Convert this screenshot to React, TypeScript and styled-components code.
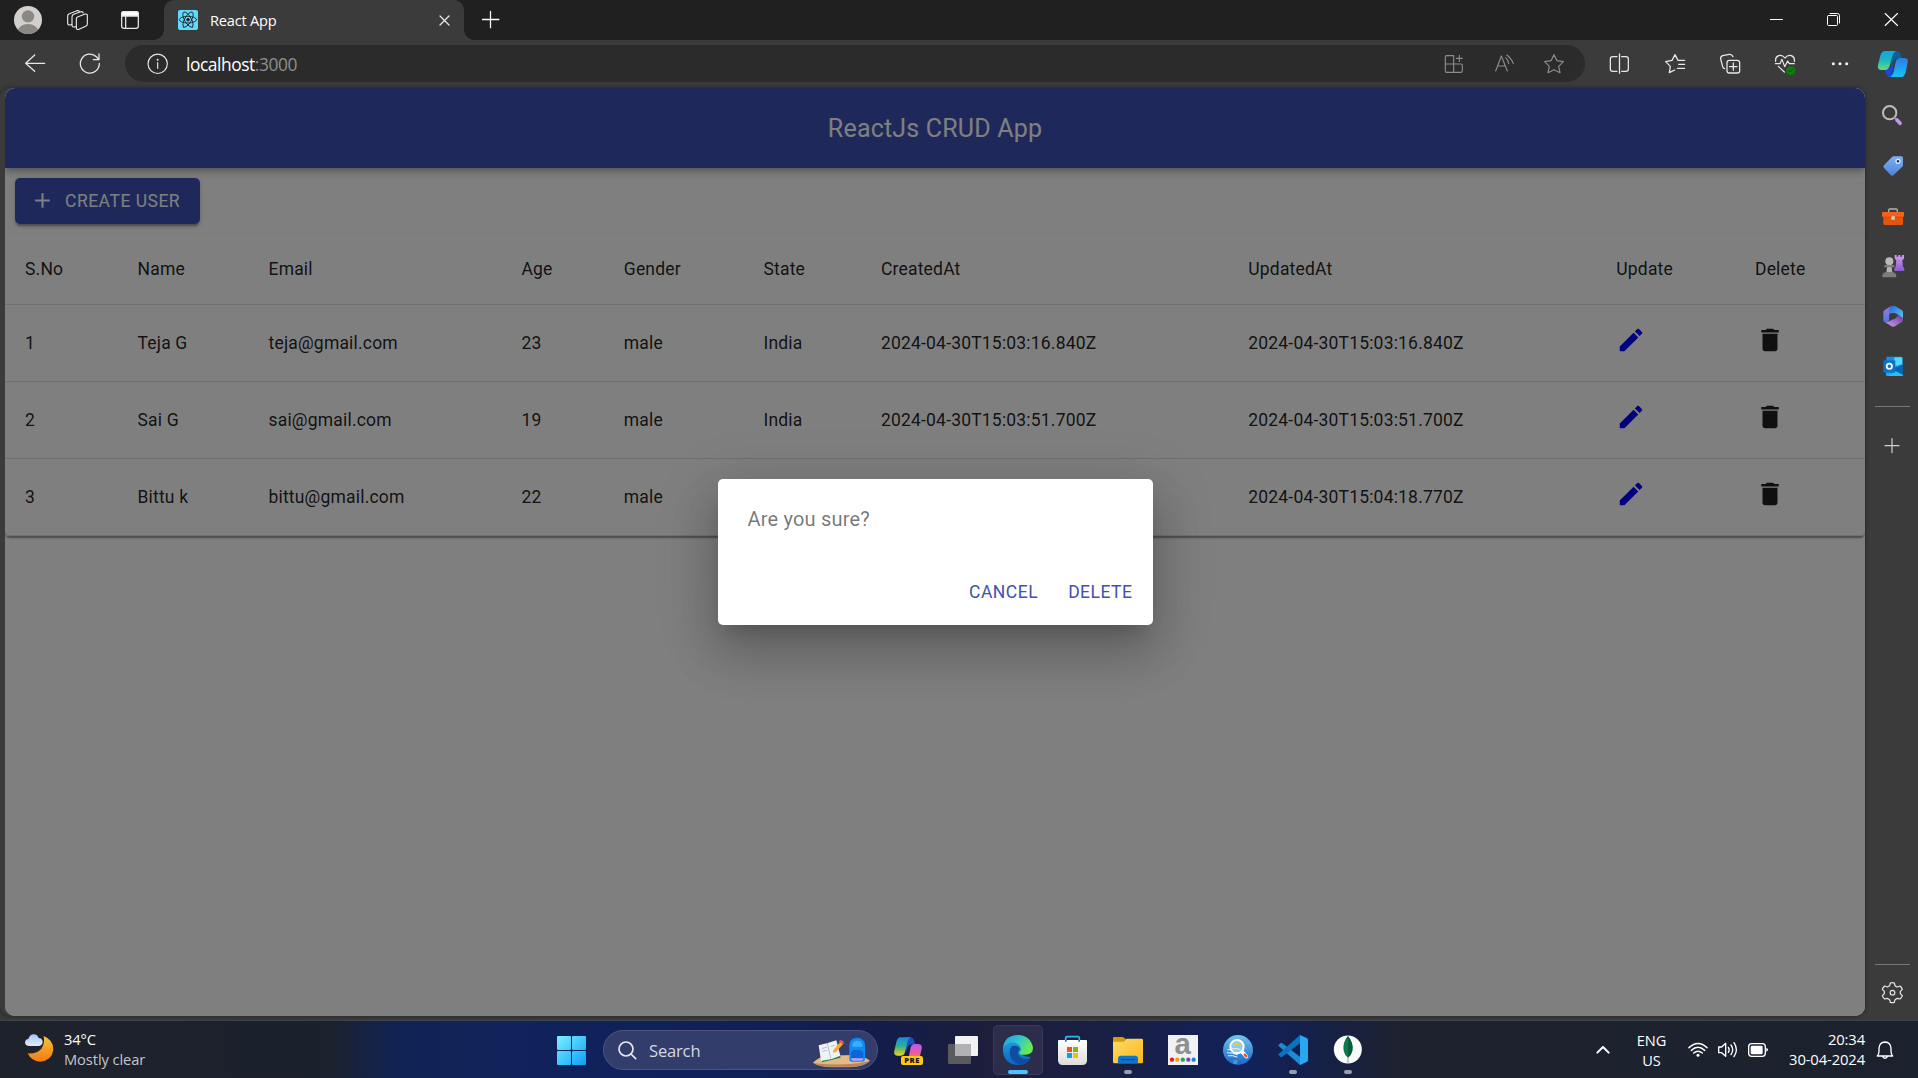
import React from "react";
import styled, { createGlobalStyle } from "styled-components";

const Global = createGlobalStyle`
  * { box-sizing: border-box; }
  html, body { margin: 0; padding: 0; background: #3b3b3b; overflow: hidden; }
`;

const ui = `"Open Sans", "Noto Sans", sans-serif`;

/* ---------- shared ---------- */

const Art = styled.svg`
  display: block;
  flex: none;
  overflow: visible;
`;

/* Every glyph is drawn on a grid of three units per pixel. */
type GlyphProps = {
  box: [number, number, number, number];
  color?: string;
  weight?: number;
  children: React.ReactNode;
};
const Glyph = ({ box, color = "#e8e8e8", weight = 3.8, children }: GlyphProps) => (
  <Art
    width={box[2] / 3}
    height={box[3] / 3}
    viewBox={box.join(" ")}
    fill="none"
    stroke={color}
    strokeWidth={weight}
    strokeLinecap="round"
    strokeLinejoin="round"
    aria-hidden
  >
    {children}
  </Art>
);

const Spacer = styled.div`
  flex: 1;
`;

/* ---------- browser chrome ---------- */

const Screen = styled.div`
  width: 1918px;
  height: 1078px;
  display: flex;
  flex-direction: column;
  background: #3b3b3b;
  font-family: ${ui};
`;

const TitleBar = styled.header`
  height: 40px;
  flex: none;
  display: flex;
  background: #202020;
`;

const Tab = styled.div`
  position: relative;
  width: 300px;
  height: 40px;
  margin-left: 4px;
  display: flex;
  align-items: center;
  background: #3b3b3b;
  border-radius: 10px 10px 0 0;
  &::before,
  &::after {
    content: "";
    position: absolute;
    bottom: 0;
    width: 10px;
    height: 10px;
  }
  &::before {
    left: -10px;
    background: radial-gradient(circle at 0 0, #202020 9.5px, #3b3b3b 10px);
  }
  &::after {
    right: -10px;
    background: radial-gradient(circle at 100% 0, #202020 9.5px, #3b3b3b 10px);
  }
`;

const TabTitle = styled.span`
  flex: 1;
  font-size: 14.6px;
  letter-spacing: -0.2px;
  line-height: 20px;
  color: #fff;
`;

const Toolbar = styled.div`
  height: 48px;
  flex: none;
  display: flex;
  padding-left: 8px;
  background: #3b3b3b;
`;

const Omnibox = styled.div`
  width: 1460px;
  height: 37px;
  margin: 5px 7px 0;
  padding-right: 6px;
  display: flex;
  align-items: center;
  background: #2b2b2b;
  border-radius: 19px;
`;

const Address = styled.div`
  margin-left: -1px;
  font-size: 17.4px;
  letter-spacing: -0.45px;
  line-height: 24px;
  color: #fff;
`;

const Port = styled.span`
  color: #8f8f8f;
`;

const Main = styled.div`
  height: 932px;
  flex: none;
  display: flex;
`;

const Sidebar = styled.aside`
  width: 53px;
  height: 932px;
  padding: 2px 0 3px;
  display: flex;
  flex-direction: column;
`;

const Divider = styled.div<{ $top?: number; $bottom: number }>`
  width: 35px;
  height: 1px;
  flex: none;
  margin: ${(p) => p.$top ?? 0}px 0 ${(p) => p.$bottom}px 10px;
  background: #777;
`;

/* ---------- web page ---------- */

const Viewport = styled.main`
  position: relative;
  width: 1860px;
  height: 927.5px;
  margin-left: 5px;
  overflow: hidden;
  background: #fff;
  border-radius: 10px;
  font-family: Roboto, sans-serif;
`;

const Frame = styled.div`
  border-radius: 10px;
  height: 927.5px;
  box-shadow: 0 0 4px rgba(0, 0, 0, 0.45);
`;

const AppBar = styled.div`
  position: relative;
  height: 80px;
  padding-top: 1px;
  display: flex;
  align-items: center;
  justify-content: center;
  background: #3f51b5;
  color: #fff;
  font-size: 25px;
  font-weight: 400;
  letter-spacing: 0.0075em;
  line-height: 41px;
  box-shadow: 0 2.5px 5px -1.25px rgba(0, 0, 0, 0.2), 0 5px 6.25px 0 rgba(0, 0, 0, 0.14),
    0 1.25px 12.5px 0 rgba(0, 0, 0, 0.12);
`;

const CreateButton = styled.button`
  height: 45.6px;
  margin: 10px;
  padding: 0 20px 0 15px;
  display: flex;
  align-items: center;
  gap: 10px;
  border: 0;
  border-radius: 5px;
  background: #3f51b5;
  color: #fff;
  font: 400 17.5px/30px Roboto, sans-serif;
  letter-spacing: 0.02857em;
  text-transform: uppercase;
  box-shadow: 0 3.75px 1.25px -2.5px rgba(0, 0, 0, 0.2), 0 2.5px 2.5px 0 rgba(0, 0, 0, 0.14),
    0 1.25px 6.25px 0 rgba(0, 0, 0, 0.12);
`;

const Paper = styled.section`
  border-radius: 5px;
  background: #fff;
  box-shadow: 0 2.5px 1.25px -1.25px rgba(0, 0, 0, 0.2), 0 1.25px 1.25px 0 rgba(0, 0, 0, 0.14),
    0 1.25px 3.75px 0 rgba(0, 0, 0, 0.12);
`;

const Row = styled.div<{ $head?: boolean }>`
  display: grid;
  grid-template-columns: 112.5px 131px 253px 102.3px 139.7px 117.5px 367.3px 368px 138.7px 130px;
  height: ${(p) => (p.$head ? 71 : 77)}px;
  border-bottom: 1px solid #e0e0e0;
`;

const Cell = styled.div<{ $icon?: boolean }>`
  display: flex;
  align-items: ${(p) => (p.$icon ? "flex-start" : "center")};
  padding: ${(p) => (p.$icon ? "20px" : "2px 20px 0")};
  font-size: 17.5px;
  font-weight: 400;
  letter-spacing: 0.01071em;
  line-height: 25px;
  color: rgba(0, 0, 0, 0.87);
  white-space: nowrap;
`;

const Material = styled.svg<{ $size: number }>`
  display: block;
  flex: none;
  width: ${(p) => p.$size}px;
  height: ${(p) => p.$size}px;
  fill: currentColor;
`;

const Backdrop = styled.div`
  position: absolute;
  inset: 0;
  display: flex;
  align-items: center;
  justify-content: center;
  background: rgba(0, 0, 0, 0.5);
`;

const Dialog = styled.div`
  width: 435px;
  height: 146px;
  padding: 25px 10px 10px 30px;
  display: flex;
  flex-direction: column;
  justify-content: space-between;
  background: #fff;
  border-radius: 5px;
  box-shadow: 0 13.75px 18.75px -8.75px rgba(0, 0, 0, 0.2), 0 30px 47.5px 3.75px rgba(0, 0, 0, 0.14),
    0 11.25px 57.5px 10px rgba(0, 0, 0, 0.12);
`;

const DialogText = styled.p`
  margin: 0;
  font-size: 20px;
  line-height: 30px;
  letter-spacing: 0.00938em;
  color: rgba(0, 0, 0, 0.54);
`;

const DialogActions = styled.div`
  display: flex;
  justify-content: flex-end;
  gap: 10px;
`;

const TextButton = styled.button`
  height: 45.6px;
  min-width: 80px;
  padding: 0 10px;
  border: 0;
  border-radius: 5px;
  background: transparent;
  color: #3f51b5;
  font: 400 17.5px/30px Roboto, sans-serif;
  letter-spacing: 0.02857em;
  text-transform: uppercase;
`;

/* ---------- taskbar ---------- */

const Taskbar = styled.footer`
  height: 58px;
  padding-top: 1px;
  flex: none;
  display: flex;
  border-top: 1px solid #3d424c;
  background: linear-gradient(
    90deg,
    #1e222b 0,
    #1b212d 330px,
    #112354 395px,
    #10225c 560px,
    #0f2057 760px,
    #141c4a 880px,
    #1d1e3b 990px,
    #191f44 1110px,
    #11215a 1250px,
    #172041 1340px,
    #1e222f 1400px,
    #1b222d 1918px
  );
`;

const Weather = styled.div`
  width: 545px;
  padding-top: 6px;
  display: flex;
`;

const WeatherText = styled.div`
  padding-top: 1px;
  display: flex;
  flex-direction: column;
  font-size: 14.7px;
  line-height: 20px;
  letter-spacing: -0.1px;
  color: #fff;
`;

const Muted = styled.span`
  color: #c4c6ca;
`;

const SearchBox = styled.div`
  width: 275px;
  height: 40px;
  margin: 8px 3px 0 5px;
  display: flex;
  align-items: center;
  background: #333d6b;
  border: 1px solid #4c5580;
  border-radius: 20px;
`;

const SearchLabel = styled.span`
  flex: 1;
  padding-top: 1px;
  font-size: 16.5px;
  line-height: 22px;
  letter-spacing: -0.15px;
  color: #d5d8e2;
`;

const AppTile = styled.div<{ $active?: boolean }>`
  width: ${(p) => (p.$active ? 50 : 55)}px;
  height: 50px;
  margin: ${(p) => (p.$active ? "3px 2px 0 2px" : "3px 0 0")};
  flex: none;
  background: ${(p) => (p.$active ? "rgba(255,255,255,.07)" : "transparent")};
  border-radius: 5px;
  box-shadow: ${(p) => (p.$active ? "inset 0 0 0 1px rgba(255,255,255,.06)" : "none")};
`;

const Language = styled.div`
  width: 58px;
  padding: 8px 1px 0 0;
  font-size: 14.6px;
  line-height: 20px;
  letter-spacing: -0.1px;
  text-align: center;
  color: #fff;
`;

const Clock = styled.div`
  width: 93px;
  padding-top: 7px;
  font-size: 14.8px;
  line-height: 20px;
  letter-spacing: -0.13px;
  text-align: right;
  white-space: nowrap;
  color: #fff;
`;

/* ---------- data ---------- */

const headers = ["S.No", "Name", "Email", "Age", "Gender", "State", "CreatedAt", "UpdatedAt", "Update", "Delete"];

const users = [
  ["1", "Teja G", "teja@gmail.com", "23", "male", "India", "2024-04-30T15:03:16.840Z", "2024-04-30T15:03:16.840Z"],
  ["2", "Sai G", "sai@gmail.com", "19", "male", "India", "2024-04-30T15:03:51.700Z", "2024-04-30T15:03:51.700Z"],
  ["3", "Bittu k", "bittu@gmail.com", "22", "male", "India", "2024-04-30T15:04:18.770Z", "2024-04-30T15:04:18.770Z"],
];

/* ---------- sections ---------- */

const WindowTop = () => (
  <TitleBar>
    <Glyph box={[0, 0, 168, 120]}>
      <clipPath id="avatar"><circle cx="84" cy="60" r="42" /></clipPath>
      <circle cx="84" cy="60" r="42" fill="#d2d0ce" stroke="none" />
      <g clipPath="url(#avatar)" fill="#8b8783" stroke="none">
        <circle cx="84" cy="49" r="18.5" />
        <ellipse cx="84" cy="97" rx="32" ry="25" />
      </g>
    </Glyph>
    <Glyph box={[168, 0, 132, 120]} weight={3.4}>
      <path d="M229 57q0-5 5-7l22-8q6-1 6 5v25q0 5-5 7l-20 9q-8 2-8-5z" />
      <path d="M229 80l-6 1q-7 1-7-6V51q0-5 5-8l22-8q5-1 7 4" />
      <path d="M215 74l-6 1q-6 0-6-6V48q0-5 5-7l23-9q5-1 7 2" />
    </Glyph>
    <Glyph box={[300, 0, 180, 120]}>
      <rect x="365" y="35" width="50" height="50" rx="7" />
      <path d="M365 48v-6q0-7 7-7h36q7 0 7 7v6z" fill="#fff" />
      <path d="M377 50v35" />
    </Glyph>
    <Tab>
      <Glyph box={[492, 0, 138, 120]}>
        <rect x="534" y="30" width="60" height="60" rx="6" fill="#61dafb" stroke="none" />
        <g stroke="#20232a" strokeWidth="2.6">
          <ellipse cx="564" cy="59" rx="26" ry="10" />
          <ellipse cx="564" cy="59" rx="26" ry="10" transform="rotate(60 564 59)" />
          <ellipse cx="564" cy="59" rx="26" ry="10" transform="rotate(120 564 59)" />
          <circle cx="564" cy="59" r="4" fill="#20232a" />
        </g>
      </Glyph>
      <TabTitle>React App</TabTitle>
      <Glyph box={[1272, 0, 120, 120]}>
        <path d="M1320 48l27 27M1347 48l-27 27" />
      </Glyph>
    </Tab>
    <Glyph box={[1392, 0, 156, 120]} color="#fff">
      <path d="M1447.500 58.500h49M1471.500 34v49" />
    </Glyph>
    <Spacer />
    <Glyph box={[1041, 0, 174, 120]} color="#fff" weight={3}>
      <path d="M1111 58.500h36.500" />
    </Glyph>
    <Glyph box={[1215, 0, 171, 120]} color="#fff" weight={3}>
      <rect x="1282.500" y="46.500" width="30" height="30" rx="3" />
      <path d="M1290 40.500h22q6.500 0 6.500 6.500v22" />
    </Glyph>
    <Glyph box={[1386, 0, 168, 120]} color="#fff" weight={3.4}>
      <path d="M1455.500 40.500l37 36M1492.500 40.500l-37 36" />
    </Glyph>
  </TitleBar>
);

const AddressRow = () => (
  <Toolbar>
    <Glyph box={[24, 120, 162, 144]}>
      <path d="M77 190h57M104 165l-27 25 27 24" />
    </Glyph>
    <Glyph box={[186, 120, 168, 144]}>
      <path d="M298 190A28.500 28.500 0 1 1 290 171L296 178M297 162v17h-17" />
    </Glyph>
    <Omnibox>
      <Glyph box={[375, 135, 186, 111]} weight={3.4}>
        <circle cx="473" cy="191.500" r="29" />
        <path d="M473 188v17" />
        <circle cx="473" cy="179" r="1.400" fill="#fff" />
      </Glyph>
      <Address>localhost<Port>:3000</Port></Address>
      <Spacer />
      <Glyph box={[87, 135, 150, 111]} color="#8c8c8c" weight={3.4}>
        <path d="M161 192V167h-21q-4 0-4 4v41q0 5 4 5h42q5 0 5-5v-16q0-4-4-4h-47M161 192v25M178 166v18M169 175h18" />
      </Glyph>
      <Glyph box={[237, 135, 150, 111]} color="#8c8c8c" weight={3.4}>
        <path d="M287 213l17-45 18 45M293 198h22" />
        <path d="M317 173q8 6 9 18M320 165q13 8 20 26" />
      </Glyph>
      <Glyph box={[387, 135, 150, 111]} color="#8c8c8c" weight={3.6}>
        <path d="M462 164l9 18 19 3-14 14 4 19-18-9-18 9 4-19-14-14 19-3z" />
      </Glyph>
    </Omnibox>
    <Glyph box={[576, 120, 165, 144]}>
      <path d="M651 170h-13q-7 0-7 7v30q0 7 7 7h13M658.500 162v58M665 170h13q7 0 7 7v30q0 7-7 7h-13" />
    </Glyph>
    <Glyph box={[741, 120, 165, 144]}>
      <path d="M854 181h-20l-9-17-9 17-19 4 14 14-3 19 16-8M836 193h18M832 205h22" />
    </Glyph>
    <Glyph box={[906, 120, 165, 144]}>
      <rect x="981" y="181" width="38" height="38" rx="7" />
      <path d="M1000 189v22M989 200h22M974 206q-5-1-6-6l-6-23q-1-8 6-10l20-4q8-1 11 7" />
    </Glyph>
    <Glyph box={[1071, 120, 165, 144]} weight={3.6}>
      <path d="M1127 184q-2-13 9-17 11-3 19 7 8-10 19-7 11 4 9 17M1126 191h14l6-13 8 22 9-17 5 8h15M1135 199l18 17" />
      <circle cx="1172" cy="212" r="13.500" fill="#107c10" stroke="none" />
      <path d="M1167 212l3.500 3.500 7-7" stroke="#06450a" strokeWidth="3" />
    </Glyph>
    <Glyph box={[1236, 120, 165, 144]}>
      <g fill="#f2f2f2" stroke="none">
        <circle cx="1300" cy="191.500" r="4.600" /><circle cx="1320" cy="191.500" r="4.600" /><circle cx="1340" cy="191.500" r="4.600" />
      </g>
    </Glyph>
    <Glyph box={[1401, 120, 153, 144]}>
      <defs>
        <linearGradient id="cpA" x1="0" y1="0" x2="0" y2="1"><stop offset="0" stopColor="#12a5e8" /><stop offset=".5" stopColor="#1fb8ba" /><stop offset="1" stopColor="#63d98a" /></linearGradient>
        <linearGradient id="cpB" x1="0" y1="0" x2="0" y2="1"><stop offset="0" stopColor="#2f7ae6" /><stop offset="1" stopColor="#16c3fb" /></linearGradient>
      </defs>
      <g stroke="none">
        <path fill="#0d5f95" d="M1476 153h14q9 0 13 11l2 9q-2 1-9 1-10 0-14 9l-10 17z" />
        <path fill="#1c46dc" d="M1482 231h-12q-9 0-13-12l-2-10q16 0 19-10l9-12-6 30z" />
        <path fill="url(#cpA)" d="M1454 153h37q-10 2-14 15l-8 31q-4 11-14 11h-12q-12-1-9-14l7-29q4-14 13-14z" />
        <path fill="url(#cpB)" d="M1504 231h-35q8-2 12-15l6-31q4-11 13-11h14q12 1 9 14l-6 29q-4 14-13 14z" />
      </g>
    </Glyph>
  </Toolbar>
);

const EdgeSidebar = () => (
  <Sidebar>
    <Glyph box={[915, 0, 159, 150]}>
      <circle cx="989" cy="68" r="20" stroke="#bdbdbd" strokeWidth="6" />
      <path d="M1003 83l5 5" stroke="#9a9a9a" strokeWidth="5" />
      <path d="M1011 90l9 10" stroke="#c493ee" strokeWidth="11" />
    </Glyph>
    <Glyph box={[915, 150, 159, 150]}>
      <defs><linearGradient id="tag" x1="0" y1="0" x2="0" y2="1"><stop offset="0" stopColor="#7db1f4" /><stop offset="1" stopColor="#4f80dc" /></linearGradient></defs>
      <path d="M1001 199h22q6 0 6 6v20q0 3-2 5l-26 25q-5 4-9 0l-20-21q-4-4 0-8l24-25q2-2 5-2z" fill="url(#tag)" stroke="none" />
      <circle cx="1014" cy="214" r="6" fill="#2c3850" stroke="#e6eefb" strokeWidth="3.500" />
    </Glyph>
    <Glyph box={[915, 300, 159, 153]}>
      <path d="M986 367v-6q0-4 4-4h18q4 0 4 4v6" stroke="#b5b5b5" />
      <g stroke="none">
        <path d="M970 376h59v25q0 4-4 4h-51q-4 0-4-4z" fill="#e5530f" />
        <path d="M968 366h63q1 0 1 2v10q0 3-3 3h-59q-4 0-4-3v-10z" fill="#f2621b" />
        <path d="M970 380h59v2h-59z" fill="#c84408" />
        <rect x="994" y="378" width="11" height="12" rx="4" fill="#c8c3c0" />
      </g>
    </Glyph>
    <Glyph box={[915, 453, 159, 150]}>
      <defs><linearGradient id="rook" x1="0" y1="0" x2="0" y2="1"><stop offset="0" stopColor="#cf9bf5" /><stop offset="1" stopColor="#8c5ac9" /></linearGradient></defs>
      <g stroke="none">
        <path fill="url(#rook)" d="M1004 495h6v5h5v-5h6v5h5v-5h6v11l-5 5 2 19q4 3 4 8v3q0 2-2 2h-26q-2 0-2-2v-3q0-5 4-8l2-19-5-5z" />
        <circle cx="988" cy="514" r="12" fill="#b9b9b9" />
        <path d="M982 524h12l3 24h-18z" fill="#b3b3b3" />
        <rect x="973" y="525" width="30" height="7" rx="3.500" fill="#7f7f7f" />
        <path d="M967 560q-1-12 12-14h18q12 2 12 14-1 2-4 2h-34q-4 0-4-2z" fill="#7d7d7d" />
      </g>
    </Glyph>
    <Glyph box={[915, 603, 159, 150]}>
      <defs>
        <linearGradient id="mA" x1="0" y1="0" x2="0" y2="1"><stop offset="0" stopColor="#a678e0" /><stop offset="1" stopColor="#4a78e4" /></linearGradient>
        <linearGradient id="mB" x1="0" y1="0" x2="1" y2="1"><stop offset="0" stopColor="#2b63d0" /><stop offset="1" stopColor="#52cff5" /></linearGradient>
        <linearGradient id="mC" x1="0" y1="1" x2="1" y2="0"><stop offset="0" stopColor="#dc9bf0" /><stop offset="1" stopColor="#5a3b9c" /></linearGradient>
      </defs>
      <g stroke="none">
        <path d="M994 648l-20 12q-4 3-4 7v22q0 5 4 7 9 3 13-5l1-23q0-14 6-20z" fill="url(#mA)" />
        <path d="M987 672q0-20 8-24 5-2 10 0l20 12q4 3 4 7v18l-16-12q-12-8-26-1z" fill="url(#mB)" />
        <path d="M1029 684v5q0 4-4 7l-20 13q-5 3-10 0l-21-13q7 2 13-2l17-8q10-5 9-14z" fill="url(#mC)" />
      </g>
    </Glyph>
    <Glyph box={[915, 753, 159, 150]}>
      <g stroke="none">
        <rect x="979" y="800" width="48" height="45" rx="3" fill="#1490df" />
        <path d="M1003 802h21q3 0 3 3v27h-24z" fill="#50d9ff" />
        <path d="M978 832l26-4 25-6v32q0 4-4 4h-43q-4 0-4-4z" fill="#28a8ea" />
        <path d="M1029 823v33l-34-20z" fill="#0a63ad" />
        <path d="M1010 845l19 10q-1 3-4 3h-43z" fill="#2bbcf0" />
        <rect x="970" y="811" width="36" height="37" rx="4" fill="#0a72cf" />
      </g>
      <circle cx="988" cy="829" r="8" stroke="#fff" strokeWidth="5" />
    </Glyph>
    <Divider $top={15} $bottom={13} />
    <Glyph box={[915, 990, 159, 150]} color="#d0d0d0" weight={3.6}>
      <path d="M975 1067h42M996 1046v42" />
    </Glyph>
    <Spacer />
    <Divider $bottom={2} />
    <Glyph box={[915, 81, 159, 150]} weight={3.6}>
      <path d="M991 129q6-2 12 0l2 8q4 3 7 4l8-3q5 4 7 10l-6 6v7l6 6q-2 6-7 10l-8-2-7 4-2 8q-6 2-12 0l-2-8-7-4-8 2q-5-4-7-10l6-6v-7l-6-6q2-6 7-10l8 3 7-4z" />
      <circle cx="997.500" cy="158" r="7" />
    </Glyph>
  </Sidebar>
);

const CrudPage = () => (
  <Viewport>
    <AppBar>ReactJs CRUD App</AppBar>
    <CreateButton>
      <Material $size={25} viewBox="0 0 24 24"><path d="M19 13h-6v6h-2v-6H5v-2h6V5h2v6h6v2z" /></Material>
      Create User
    </CreateButton>
    <Paper>
      <Row $head>
        {headers.map((h) => <Cell key={h}>{h}</Cell>)}
      </Row>
      {users.map((u) => (
        <Row key={u[0]}>
          {u.map((v, i) => <Cell key={i}>{v}</Cell>)}
          <Cell $icon>
            <Material $size={30} viewBox="0 0 24 24" color="#0000ff">
              <path d="M3 17.250V21h3.750L17.810 9.940l-3.750-3.750L3 17.250zM20.710 7.040c.39-.39.39-1.020 0-1.410l-2.340-2.340c-.39-.39-1.020-.39-1.410 0l-1.830 1.830 3.750 3.750 1.830-1.830z" />
            </Material>
          </Cell>
          <Cell $icon>
            <Material $size={30} viewBox="0 0 24 24">
              <path d="M6 19c0 1.100.9 2 2 2h8c1.100 0 2-.9 2-2V7H6v12zM19 4h-3.500l-1-1h-5l-1 1H5v2h14V4z" />
            </Material>
          </Cell>
        </Row>
      ))}
    </Paper>
    <Backdrop>
      <Dialog role="dialog">
        <DialogText>Are you sure?</DialogText>
        <DialogActions>
          <TextButton>Cancel</TextButton>
          <TextButton>Delete</TextButton>
        </DialogActions>
      </Dialog>
    </Backdrop>
  </Viewport>
);

const Running = ({ x, active }: { x: number; active?: boolean }) => (
  <rect
    x={x - (active ? 30 : 12)}
    y="180"
    width={active ? 60 : 24}
    height="12"
    rx="6"
    fill={active ? "#4cc2ff" : "#9a9dab"}
    stroke="none"
  />
);

const WindowsBar = () => (
  <Taskbar>
    <Weather>
      <Glyph box={[0, 144, 192, 120]}>
        <defs>
          <linearGradient id="moon" x1="0" y1="0" x2="0" y2="1"><stop offset="0" stopColor="#f7c332" /><stop offset="1" stopColor="#ef7a1a" /></linearGradient>
          <linearGradient id="cloud" x1="0" y1="0" x2="0" y2="1"><stop offset="0" stopColor="#a9c6f5" /><stop offset="1" stopColor="#dfeafb" /></linearGradient>
        </defs>
        <g stroke="none">
          <path d="M131 168q30 12 29 41-4 33-40 36-26-1-37-25 28 2 41-14 11-16 7-38z" fill="url(#moon)" />
          <path d="M86 198q-11-1-11-11 1-9 10-10 4-14 16-14 12 1 15 11 12 1 12 12-1 11-11 12z" fill="url(#cloud)" />
        </g>
      </Glyph>
      <WeatherText>
        <span>34°C</span>
        <Muted>Mostly clear</Muted>
      </WeatherText>
    </Weather>
    <Glyph box={[15, 36, 159, 168]}>
      <defs><linearGradient id="win" x1="51" y1="78" x2="138" y2="165" gradientUnits="userSpaceOnUse"><stop offset="0" stopColor="#7cf0ff" /><stop offset="1" stopColor="#0aa0f8" /></linearGradient></defs>
      <g fill="url(#win)" stroke="none">
        <rect x="51" y="78" width="42" height="42" rx="3" /><rect x="96" y="78" width="42" height="42" rx="3" />
        <rect x="51" y="123" width="42" height="42" rx="3" /><rect x="96" y="123" width="42" height="42" rx="3" />
      </g>
    </Glyph>
    <SearchBox>
      <Glyph box={[192, 60, 135, 120]} color="#e6e8ef" weight={5}>
        <circle cx="258" cy="117" r="21" />
        <path d="M273 132l14 14" />
      </Glyph>
      <SearchLabel>Search</SearchLabel>
      <Glyph box={[813, 60, 198, 120]}>
        <g stroke="none">
          <path d="M819 158q18-18 40-21l80-2q36 4 51 17-18 18-60 19h-60q-32-2-51-13z" fill="#e5b987" />
          <path d="M820 159q30 5 85 4 55-1 84-10-18 18-60 19h-60q-32-2-49-13z" fill="#b88a5b" />
          <path d="M838 107l52-12 12 48-56 14z" fill="#258a4c" />
          <path d="M836 106l27-7 26-8 12 46-26 10-32 6z" fill="#f0f3f5" />
          <path d="M880 121l22-27 9 6-22 25-10 4z" fill="#f5a93a" />
          <path d="M896 94l6-4 9 4-2 10z" fill="#e85c4a" />
          <path d="M940 92v-6q0-6 11-6t11 6v6z" fill="#0c4dbb" />
          <path d="M928 104q2-19 23-20 22 1 24 20v42q0 9-9 9h-30q-8 0-8-9z" fill="#118af5" />
          <path d="M933 128q2-9 18-9t19 9v18q0 6-6 6h-25q-6 0-6-6z" fill="#0b66d8" />
          <path d="M937 102q5-10 15-10t15 10v8h-30z" fill="#38b0ff" />
          <path d="M933 145h37q0 7-6 7h-25q-6 0-6-7z" fill="#c2a6ff" />
        </g>
        <path d="M862 100l10 44M847 115l12-3M849 124l12-3M873 109l10-3" stroke="#9aa3ad" strokeWidth="2" />
      </Glyph>
    </SearchBox>
    <AppTile>
      <Glyph box={[1023, 45, 165, 150]}>
        <defs>
          <linearGradient id="pA" x1="0" y1="0" x2="0" y2="1"><stop offset="0" stopColor="#1b86e8" /><stop offset=".5" stopColor="#34b286" /><stop offset="1" stopColor="#f2d31b" /></linearGradient>
          <linearGradient id="pB" x1="0" y1="0" x2="0" y2="1"><stop offset="0" stopColor="#b05cf0" /><stop offset=".6" stopColor="#ee5e9a" /><stop offset="1" stopColor="#f98b5b" /></linearGradient>
        </defs>
        <g stroke="none">
          <path fill="#1c4fc2" d="M1097 82h13q9 0 13 12l3 9h-11q-8 0-12 9l-5 14z" />
          <path fill="url(#pA)" d="M1081 82h33q-9 2-12 15l-7 30q-3 10-12 10h-11q-12-1-9-15l6-26q4-14 12-14z" />
          <path fill="url(#pB)" d="M1128 150h-30q7-3 9-12l5-26q3-10 12-10h12q12 2 9 15l-5 21q-3 12-12 12z" />
          <rect x="1083" y="138" width="66" height="27" rx="6" fill="#ffc816" />
        </g>
        <text x="1116" y="160" fontSize="23" fontWeight="800" fontFamily="Open Sans, sans-serif" letterSpacing="1.500" textAnchor="middle" fill="#1b1600" stroke="none">PRE</text>
      </Glyph>
    </AppTile>
    <AppTile>
      <Glyph box={[1188, 45, 165, 150]}>
        <g stroke="none">
          <rect x="1224" y="102" width="69" height="60" rx="4" fill="#5b5b5e" />
          <rect x="1245" y="78" width="69" height="60" rx="3" fill="#f2f2f2" />
          <path d="M1245 102h48v36h-45q-3 0-3-3z" fill="#b1b1b3" />
        </g>
      </Glyph>
    </AppTile>
    <AppTile $active>
      <Glyph box={[39, 45, 150, 150]}>
        <defs>
          <linearGradient id="eA" x1="0" y1="0" x2="1" y2=".5"><stop offset="0" stopColor="#1d9fdc" /><stop offset=".5" stopColor="#31c5cf" /><stop offset="1" stopColor="#66eb4f" /></linearGradient>
          <linearGradient id="eB" x1="0" y1="0" x2="0" y2="1"><stop offset="0" stopColor="#1b9de2" /><stop offset="1" stopColor="#0b63c4" /></linearGradient>
        </defs>
        <g stroke="none">
          <path d="M69 117q3-20 25-25 28-1 33 27l-1 14q6 9 26 7-11 25-38 25-40-2-45-40z" fill="url(#eB)" />
          <path d="M96 108q-10 12-5 30 8 22 31 26 20-1 31-21-15 7-29 0-10-5-10-15 0-7 6-10-4-14-24-10z" fill="#124c9e" />
          <path d="M69 116q3-40 45-41 38 2 45 38 0 19-21 21-20 2-20-5 0-4 4-7 3-8-5-17-16-15-36-3-9 5-12 14z" fill="url(#eA)" />
        </g>
        <Running x={114} active />
      </Glyph>
    </AppTile>
    <AppTile>
      <Glyph box={[195, 45, 165, 150]}>
        <defs><linearGradient id="bag" x1="0" y1="0" x2="0" y2="1"><stop offset="0" stopColor="#ffffff" /><stop offset="1" stopColor="#dcdcdc" /></linearGradient></defs>
        <path d="M257 94V84q0-4 4-4h33q4 0 4 4v10" stroke="#35b5f0" strokeWidth="5" strokeLinecap="butt" />
        <g stroke="none">
          <path d="M237 90h81q3 0 3 3v58q0 14-14 14h-59q-14 0-14-14V93q0-3 3-3z" fill="url(#bag)" />
          <path d="M255 90h5v5h-5zM295 90h5v5h-5z" fill="#1878b8" />
          <rect x="261" y="111" width="15" height="15" fill="#f25022" /><rect x="279" y="111" width="15" height="15" fill="#7fba00" />
          <rect x="261" y="129" width="15" height="15" fill="#00a4ef" /><rect x="279" y="129" width="15" height="15" fill="#ffb900" />
        </g>
      </Glyph>
    </AppTile>
    <AppTile>
      <Glyph box={[360, 45, 165, 150]}>
        <defs><linearGradient id="fold" x1="0" y1="0" x2="1" y2="1"><stop offset="0" stopColor="#ffda6b" /><stop offset="1" stopColor="#f7b81a" /></linearGradient></defs>
        <g stroke="none">
          <path d="M399 84q0-3 3-3h26l10 6h-1l-7 9h-31z" fill="#d99a06" />
          <path d="M399 95h28q4 0 6-3l4-4q1-2 4-2h44q4 0 4 4v66q0 4-4 4h-82q-4 0-4-4z" fill="url(#fold)" />
          <path d="M414 160v-14q0-9 9-9h42q9 0 9 9v14z" fill="#0f74cc" />
        </g>
        <path d="M425 149h38" stroke="#0a4c8c" />
        <Running x={444} />
      </Glyph>
    </AppTile>
    <AppTile>
      <Glyph box={[525, 45, 165, 150]}>
        <g stroke="none">
          <rect x="564" y="75" width="90" height="90" fill="#f1f1f3" />
          <text x="608" y="132" fontSize="88" fontWeight="700" fontFamily="Liberation Sans, sans-serif" textAnchor="middle" fill="#8f8f8f">a</text>
          <circle cx="576" cy="149" r="6.500" fill="#f01818" /><circle cx="592" cy="149" r="6.500" fill="#f59a1c" />
          <circle cx="608.500" cy="149" r="6.500" fill="#18a862" /><circle cx="625" cy="149" r="6.500" fill="#8a3ad8" />
          <circle cx="641" cy="149" r="6.500" fill="#1486dc" />
        </g>
      </Glyph>
    </AppTile>
    <AppTile>
      <Glyph box={[690, 45, 165, 150]}>
        <defs><linearGradient id="lens" x1="0" y1="0" x2="0" y2="1"><stop offset="0" stopColor="#74c4ee" /><stop offset="1" stopColor="#1767c8" /></linearGradient></defs>
        <circle cx="774" cy="120" r="45" fill="url(#lens)" stroke="none" />
        <circle cx="771" cy="110" r="20" fill="#8fcbea" stroke="#fff" strokeWidth="6" />
        <path d="M761 107q9-9 20-2" stroke="#f0c84c" strokeWidth="4" />
        <path d="M787 126l12 14" stroke="#fff" strokeWidth="11" />
        <path d="M794 134l5 5" stroke="#e0532a" strokeWidth="7" />
        <path d="M742 128q16 0 30 6M745 137q14-2 26 4M743 119h10M756 116q12-1 24 2" stroke="#e4f4fc" strokeWidth="3" />
        <circle cx="766" cy="156" r="7" fill="#4b93dc" stroke="none" />
      </Glyph>
    </AppTile>
    <AppTile>
      <Glyph box={[855, 45, 165, 150]}>
        <g stroke="none">
          <path d="M895 106l6-6q3-2 6 0l61 46-8 19-64-57q-2-1-1-2z" fill="#1b8bd6" />
          <path d="M895 134l6 6q3 2 6 0l61-46-8-19-64 57q-2 1-1 2z" fill="#0b73bd" />
          <path d="M960 75l20 9q4 2 4 6v60q0 4-4 6l-20 9z" fill="#2aa7f2" />
        </g>
        <Running x={939} />
      </Glyph>
    </AppTile>
    <AppTile>
      <Glyph box={[1020, 45, 165, 150]}>
        <g stroke="none">
          <circle cx="1103.500" cy="118.500" r="42" fill="#fafafa" />
          <path d="M1103 78q18 20 14 44-3 13-13 21-11-9-13-21-4-24 12-44z" fill="#0c7a4e" />
          <path d="M1104 78q17 20 13 44-3 13-13 21z" fill="#0a5c40" />
          <path d="M1102.500 140h3v20h-3z" fill="#8ba198" />
        </g>
        <Running x={1104} />
      </Glyph>
    </AppTile>
    <Spacer />
    <Glyph box={[69, 246, 120, 168]} color="#fff" weight={6}>
      <path d="M112 338l17-17 17 17" />
    </Glyph>
    <Language>ENG<br />US</Language>
    <Glyph box={[363, 246, 102, 168]} color="#fff" weight={4.5}>
      <path d="M387 323q27-25 54 0" />
      <path d="M394 331q20-18 40 0M401 339q13-11 26 0" />
      <circle cx="414" cy="346" r="4.500" fill="#fff" stroke="none" />
    </Glyph>
    <Glyph box={[465, 246, 87, 168]} color="#fff" weight={4}>
      <path d="M476 321h9l12-11v39l-12-11h-9zM505 322q5 7 0 15M513 315q10 14 0 29M522 308q14 21 0 42" />
    </Glyph>
    <Glyph box={[552, 246, 84, 168]} color="#fff" weight={4}>
      <rect x="566" y="311" width="50" height="38" rx="9" />
      <rect x="572" y="317" width="36" height="26" rx="4" fill="#fff" stroke="none" />
      <path d="M619 323q5 1 5 6t-5 6z" fill="#fff" stroke="none" />
    </Glyph>
    <Clock>20:34<br />30-04-2024</Clock>
    <Glyph box={[915, 246, 159, 168]} color="#fff" weight={4}>
      <path d="M952 348q5-6 5-14v-9q1-18 18-19 17 1 18 19v9q0 8 5 14zM968 350q7 10 14 0" />
    </Glyph>
  </Taskbar>
);

const App = () => (
  <>
    <Global />
    <Screen>
      <WindowTop />
      <AddressRow />
      <Main>
        <Frame>
          <CrudPage />
        </Frame>
        <EdgeSidebar />
      </Main>
      <WindowsBar />
    </Screen>
  </>
);

export default App;
